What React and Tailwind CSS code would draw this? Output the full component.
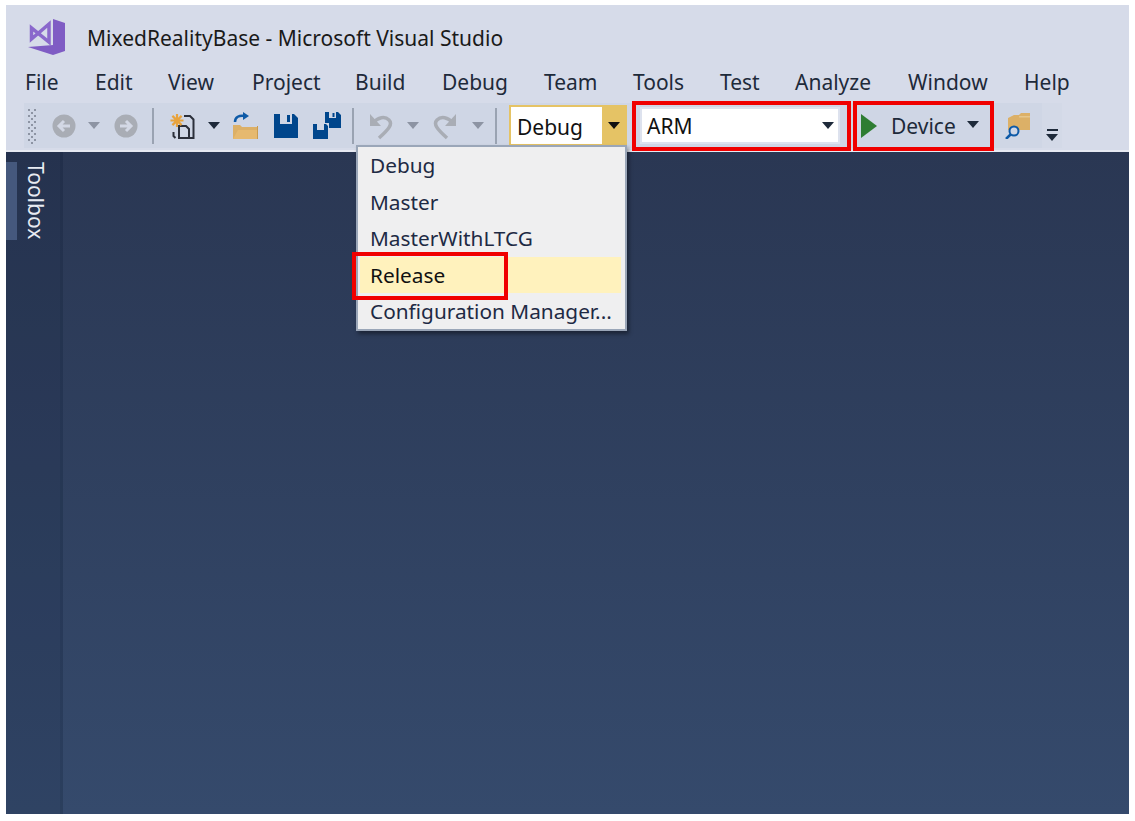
const menus = [
  ['File', 'w-[70px]'],
  ['Edit', 'w-[73px]'],
  ['View', 'w-[84px]'],
  ['Project', 'w-[103px]'],
  ['Build', 'w-[87px]'],
  ['Debug', 'w-[102px]'],
  ['Team', 'w-[89px]'],
  ['Tools', 'w-[87px]'],
  ['Test', 'w-[75px]'],
  ['Analyze', 'w-[113px]'],
  ['Window', 'w-[116px]'],
  ['Help', 'w-[60px]'],
];

const configs = ['Debug', 'Master', 'MasterWithLTCG', 'Release', 'Configuration Manager...'];

function Caret({ className, color = '#1e2a3a' }) {
  return (
    <svg className={className} width="12" height="7" viewBox="0 0 12 7">
      <path d="M0 0h12L6 7z" fill={color} />
    </svg>
  );
}

function Sep({ className }) {
  return <div className={`w-[2px] h-[36px] bg-[#9aa3b2] ${className}`}></div>;
}

function Logo() {
  return (
    <svg width="38" height="38" viewBox="0 0 38 38">
      <path d="M25 1l12 4v28l-12 4L0 29l25-2z" fill="#7f5cc4" />
      <path d="M3.500 10v11L21 6v18z" fill="none" stroke="#8a68cc" strokeWidth="3.500" />
    </svg>
  );
}

function NavCircle({ className, flip }) {
  return (
    <svg className={className} width="24" height="24" viewBox="0 0 24 24">
      <circle cx="12" cy="12" r="11.5" fill="#a9adb5" />
      <path
        d={flip ? 'M6 12h10M12 7l5 5-5 5' : 'M18 12H8M12 7l-5 5 5 5'}
        stroke="#d3d8e5"
        strokeWidth="3"
        fill="none"
      />
    </svg>
  );
}

function NewProject({ className }) {
  return (
    <svg className={className} width="26" height="30" viewBox="0 0 26 30">
      <path d="M14 5h6l3.500 3.500V27H19" fill="none" stroke="#2b2f3a" strokeWidth="2" />
      <path d="M9 15h7l3 3v9H9z" fill="none" stroke="#2b2f3a" strokeWidth="2" />
      <path d="M3.500 21v4l2 2" fill="none" stroke="#2b2f3a" strokeWidth="2" />
      <path d="M7 3v13M.5 9.500h13M2.400 4.900l9.200 9.200M11.600 4.900l-9.200 9.200" stroke="#e8a33d" strokeWidth="2.200" />
    </svg>
  );
}

function OpenFolder({ className }) {
  return (
    <svg className={className} width="27" height="28" viewBox="0 0 27 28">
      <path d="M1 27V13h7l2 2h16v12z" fill="#dcb067" />
      <path d="M1 27l5-9h20v9z" fill="#e6b96f" />
      <path d="M25 14h1v13h-1z" fill="#c89b50" />
      <path d="M3 10C3 5 7 3 13 4" fill="none" stroke="#0e5aa7" strokeWidth="2.500" />
      <path d="M11 0l6 4-6 4z" fill="#0e5aa7" />
    </svg>
  );
}

function Save({ className }) {
  return (
    <svg className={className} width="24" height="24" viewBox="0 0 24 24">
      <path d="M0 0h20l4 4v20H0z" fill="#00468c" />
      <path d="M6 0h12v10H6z" fill="#cfd6e5" />
      <path d="M13 1h3v7h-3z" fill="#00468c" />
    </svg>
  );
}

function SaveAll({ className }) {
  return (
    <svg className={className} width="28" height="27" viewBox="0 0 28 27">
      <path d="M0 12h13l2 2v13H0z" fill="#00468c" />
      <path d="M4 12h7v6H4z" fill="#cfd6e5" />
      <path d="M12 0h13l3 3v13H16v-5h-4z" fill="#00468c" />
      <path d="M16 0h7v6h-7z" fill="#cfd6e5" />
      <path d="M19.500 1h2v4h-2z" fill="#00468c" />
    </svg>
  );
}

function Undo({ className, flip }) {
  return (
    <svg className={`${className} ${flip ? '-scale-x-100' : ''}`} width="24" height="30" viewBox="0 0 24 30">
      <path d="M1 3v12h11z" fill="#a9adb5" />
      <path d="M4 12C9 6 16 5 20 9c4 4 0 9-10 18" fill="none" stroke="#a9adb5" strokeWidth="3.500" />
    </svg>
  );
}

function FindFolder({ className }) {
  return (
    <svg className={className} width="26" height="26" viewBox="0 0 26 26">
      <path d="M3 5l6-3h5l2-2h9v17H12V9H3z" fill="#dcb067" />
      <path d="M14 3h11v1.500H14z" fill="#e6c68c" />
      <path d="M3 9h9v8h-9z" fill="#dcb067" />
      <circle cx="9" cy="18" r="4.500" fill="#cfd6e5" stroke="#0e5aa7" strokeWidth="2" />
      <path d="M5.500 21.500L1 26" stroke="#0e5aa7" strokeWidth="2.500" />
    </svg>
  );
}

function Grip() {
  return (
    <svg width="12" height="36" viewBox="0 0 12 36">
      {[1, 7, 13, 19, 25, 31].map((y) => (
        <g key={y} fill="#8d94a3">
          <rect x="2" y={y} width="2" height="2" />
          <rect x="8" y={y} width="2" height="2" />
          <rect x="5" y={y + 3} width="2" height="2" />
        </g>
      ))}
    </svg>
  );
}

export default function App() {
  return (
    <div
      className="relative w-[1135px] h-[821px] bg-white pt-[5px] pl-[6px] pr-[6px] pb-[7px] overflow-hidden"
      style={{ fontFamily: '"Noto Sans", "Open Sans", sans-serif' }}
    >
      <div className="relative flex flex-col h-full bg-[#d6dbe9]">
        {/* Title bar */}
        <div className="flex items-center h-[58px] pt-[6px] pl-[22px]">
          <Logo />
          <span className="ml-[21px] pt-[4px] text-[21px] text-[#1a1a1a]">
            MixedRealityBase - Microsoft Visual Studio
          </span>
        </div>

        {/* Menu bar */}
        <div className="flex items-center h-[40px] pl-[19px] text-[21px] text-[#1e2a3a]">
          {menus.map(([name, width]) => (
            <div key={name} className={width}>{name}</div>
          ))}
        </div>

        {/* Toolbar */}
        <div className="flex h-[47px]">
          <div className="flex items-center w-[1038px] h-[45px] ml-[18px] pl-[2px] bg-[#cfd6e5] *:shrink-0">
            <Grip />
            <NavCircle className="ml-[14px]" />
            <Caret className="ml-[12px]" color="#8d94a3" />
            <NavCircle className="ml-[14px]" flip />
            <Sep className="ml-[14px]" />
            <NewProject className="ml-[16px]" />
            <Caret className="ml-[12px]" />
            <OpenFolder className="ml-[12px]" />
            <Save className="ml-[15px]" />
            <SaveAll className="ml-[15px]" />
            <Sep className="ml-[11px]" />
            <Undo className="ml-[15px]" />
            <Caret className="ml-[14px]" color="#8d94a3" />
            <Undo className="ml-[14px]" flip />
            <Caret className="ml-[15px]" color="#8d94a3" />
            <Sep className="ml-[11px]" />

            {/* Configuration combo */}
            <div className="flex ml-[12px] w-[118px] h-[41px] border-2 border-[#e5c365] bg-white">
              <span className="flex-1 pl-[6px] pt-[1px] leading-[38px] text-[21px] text-[#111]">Debug</span>
              <div className="flex items-center justify-center w-[23px] bg-[#e5c365]">
                <Caret color="#111" />
              </div>
            </div>

            {/* Platform combo */}
            <div className="flex items-center ml-[13px] w-[200px] h-[37px] pl-[5px] pr-[4px] border-2 border-[#dde2ee] bg-white">
              <span className="flex-1 pt-[2px] text-[21px] text-[#111]">ARM</span>
              <Caret color="#1e2a3a" />
            </div>

            {/* Run */}
            <svg className="ml-[21px]" width="16" height="24" viewBox="0 0 16 24">
              <path d="M0 0l16 12L0 24z" fill="#2e7d32" />
            </svg>
            <span className="ml-[14px] w-[66px] pt-[3px] text-[21px] text-[#1e2a3a]">Device</span>
            <Caret className="ml-[10px] mb-[3px]" />

            <div className="flex items-center justify-center ml-[15px] w-[48px] h-[45px] bg-[#cfd6e5]">
              <FindFolder />
            </div>
            <div className="flex-1 h-[45px] flex flex-col items-center justify-end pb-[7px] bg-[#d3d9e7]">
              <div className="w-[11px] h-[2px] mb-[3px] bg-[#1e2a3a]"></div>
              <Caret />
            </div>
          </div>
        </div>

        {/* Document area */}
        <div className="flex flex-1 bg-gradient-to-b from-[#2a3753] to-[#354a6c] border-t-2 border-[#e6e9f2]">
          <div className="flex w-[57px] pt-[10px] bg-[#0b1a33]/15 border-r-[3px] border-[#0b1a33]/10">
            <div className="w-[11px] h-[78px] bg-[#45587d]"></div>
            <div className="ml-[6px] h-[78px] [writing-mode:vertical-rl] text-[21px] leading-[26px] text-[#e8ebf2]">
              Toolbox
            </div>
          </div>
        </div>

        {/* Configuration dropdown */}
        <div className="absolute left-[350px] top-[140px] w-[271px] h-[186px] px-[2px] bg-[#efeff0] border-2 border-[#9aa6b8] shadow-[2px_3px_4px_rgba(0,0,0,0.4)]">
          {configs.map((name) => (
            <div
              key={name}
              className={`h-[36.5px] pl-[10px] leading-[36px] text-[20.8px] whitespace-nowrap ${
                name === 'Release' ? 'mr-[2px] bg-[#fff2bd] text-[#111]' : 'text-[#1e2a44]'
              }`}
            >
              {name}
            </div>
          ))}
        </div>

        {/* Red highlight boxes */}
        <div className="absolute left-[626px] top-[96px] w-[219px] h-[50px] border-4 border-[#f00000]"></div>
        <div className="absolute left-[847px] top-[96px] w-[141px] h-[50px] border-4 border-[#f00000]"></div>
        <div className="absolute left-[346px] top-[247px] w-[156px] h-[48px] border-4 border-[#f00000]"></div>
      </div>
    </div>
  );
}
